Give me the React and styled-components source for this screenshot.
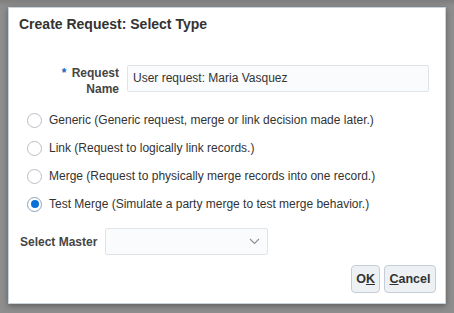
import React from "react";
import styled, { createGlobalStyle } from "styled-components";

const Global = createGlobalStyle`
  html, body { margin: 0; padding: 0; }
  body {
    width: 454px; height: 313px; overflow: hidden;
    background: #8d8d8d;
    font-family: "Liberation Sans", Arial, sans-serif;
  }
`;

const Backdrop = styled.div`
  width: 454px;
  height: 313px;
  box-sizing: border-box;
  padding: 7px 8px 9px 8px;
  background: linear-gradient(#7d7d7d 0, #8e8e8e 6px, #8e8e8e 100%);
`;

const Dialog = styled.div`
  width: 438px;
  height: 297px;
  box-sizing: border-box;
  background: #fff;
  border: 1px solid #c9d3dc;
  box-shadow: 0 2px 6px rgba(0,0,0,0.35);
  display: flex;
  flex-direction: column;
  padding: 7px 9px 10px 10px;
`;

const Title = styled.h1`
  margin: 0;
  font-size: 14px;
  font-weight: bold;
  color: #333;
  line-height: 18px;
`;

const NameRow = styled.div`
  display: flex;
  align-items: flex-start;
  margin-top: 32px;
  gap: 8px;
`;

const Label = styled.label`
  width: ${p => (p.$w ? `${p.$w}px` : "auto")};
  text-align: right;
  font-size: 12px;
  font-weight: bold;
  color: #454545;
  line-height: 16px;
`;

const Star = styled.span`
  color: #1d62b0;
  font-size: 12px;
  vertical-align: top;
  margin-right: 2px;
`;

const TextInput = styled.div`
  width: 302px;
  height: 27px;
  box-sizing: border-box;
  border: 1px solid #dfe4e8;
  border-radius: 2px;
  background: #fafbfd;
  font-size: 12px;
  color: #333;
  line-height: 25px;
  padding-left: 5px;
`;

const RadioList = styled.div`
  display: flex;
  flex-direction: column;
  margin-top: 9px;
`;

const RadioRow = styled.div`
  display: flex;
  align-items: center;
  height: 28px;
  padding-left: 8px;
  gap: 7px;
  font-size: 12px;
  color: #333;
`;

const Circle = styled.span`
  width: 15px;
  height: 15px;
  box-sizing: border-box;
  border-radius: 50%;
  border: 1px solid ${p => (p.$on ? "#8aa2bb" : "#b8bfc6")};
  background: #fff;
  display: flex;
  align-items: center;
  justify-content: center;
  &::after {
    content: "";
    display: ${p => (p.$on ? "block" : "none")};
    width: 8px;
    height: 8px;
    border-radius: 50%;
    background: #0b6fd8;
  }
`;

const MasterRow = styled.div`
  display: flex;
  align-items: center;
  margin-top: 10px;
  padding-left: 1px;
  gap: 8px;
`;

const SelectBox = styled.div`
  width: 163px;
  height: 27px;
  box-sizing: border-box;
  border: 1px solid #dfe4e8;
  border-radius: 2px;
  background: #fafbfd;
  display: flex;
  align-items: center;
  justify-content: flex-end;
  padding-right: 7px;
`;

const Footer = styled.div`
  display: flex;
  justify-content: flex-end;
  gap: 4px;
  margin-top: auto;
`;

const Button = styled.button`
  height: 28px;
  padding: 0 ${p => p.$pad}px;
  border: 1px solid #c5ced6;
  border-radius: 4px;
  background: #eef1f4;
  font-family: "Liberation Sans", Arial, sans-serif;
  font-weight: bold;
  font-size: 12.5px;
  color: #333;
  u { text-decoration: underline; }
`;

const options = [
  "Generic (Generic request, merge or link decision made later.)",
  "Link (Request to logically link records.)",
  "Merge (Request to physically merge records into one record.)",
  "Test Merge (Simulate a party merge to test merge behavior.)",
];

export default function App() {
  return (
    <>
      <Global />
      <Backdrop>
        <Dialog>
          <Title>Create Request: Select Type</Title>
          <NameRow>
            <Label $w={100}>
              <Star>*</Star> Request<br />Name
            </Label>
            <TextInput>User request: Maria Vasquez</TextInput>
          </NameRow>
          <RadioList>
            {options.map((o, i) => (
              <RadioRow key={o}>
                <Circle $on={i === 3} />
                {o}
              </RadioRow>
            ))}
          </RadioList>
          <MasterRow>
            <Label as="span">Select Master</Label>
            <SelectBox>
              <svg width="11" height="7" viewBox="0 0 11 7">
                <path d="M1 1l4.5 4.5L10 1" fill="none" stroke="#8a8f95" strokeWidth="1.1" />
              </svg>
            </SelectBox>
          </MasterRow>
          <Footer>
            <Button $pad={4}>O<u>K</u></Button>
            <Button $pad={4.5}><u>C</u>ancel</Button>
          </Footer>
        </Dialog>
      </Backdrop>
    </>
  );
}
